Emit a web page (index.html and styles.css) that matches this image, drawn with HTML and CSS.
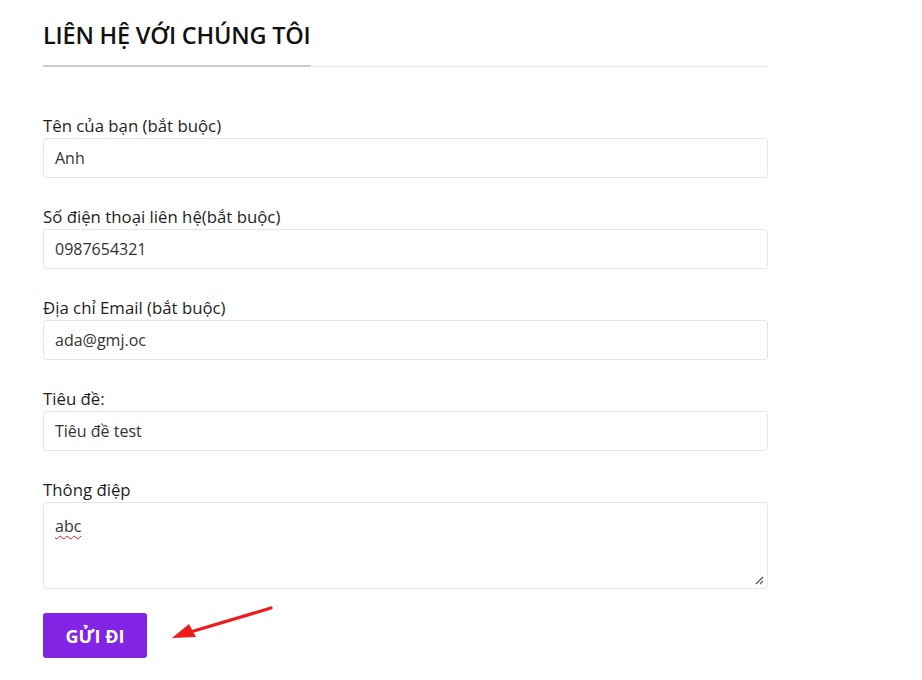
FILE: index.html
```html
<!DOCTYPE html>
<html lang="vi">
<head>
<meta charset="utf-8">
<title>Liên hệ với chúng tôi</title>
<link rel="stylesheet" href="styles.css">
</head>
<body>
<main class="page">
  <div class="title-wrap">
    <h2 class="title">LIÊN HỆ VỚI CHÚNG TÔI</h2>
  </div>
  <form class="form">
    <div class="field">
      <label class="label">Tên của bạn (bắt buộc)</label>
      <div class="input">Anh</div>
    </div>
    <div class="field">
      <label class="label">Số điện thoại liên hệ(bắt buộc)</label>
      <div class="input">0987654321</div>
    </div>
    <div class="field">
      <label class="label">Địa chỉ Email (bắt buộc)</label>
      <div class="input">ada@gmj.oc</div>
    </div>
    <div class="field">
      <label class="label">Tiêu đề:</label>
      <div class="input">Tiêu đề test</div>
    </div>
    <div class="field">
      <label class="label">Thông điệp</label>
      <div class="textarea">
        <span class="misspelled">abc</span>
        <svg class="grip" width="9" height="9" viewBox="0 0 9 9"><path d="M8 1 L1 8 M8 5 L5 8" stroke="#555" stroke-width="1.2" fill="none"/></svg>
      </div>
    </div>
    <div class="actions">
      <button type="button" class="submit">GỬI ĐI</button>
      <svg class="arrow" width="110" height="40" viewBox="0 0 110 40">
        <path d="M106 4 L22 29" stroke="#ee1c1c" stroke-width="3.2" stroke-linecap="round" fill="none"/>
        <path d="M7 34 L24 20 L31 33 Z" fill="#ee1c1c"/>
      </svg>
    </div>
  </form>
</main>
</body>
</html>
```
FILE: styles.css
```css
html, body {
  margin: 0;
  padding: 0;
  background: #ffffff;
}
body {
  font-family: "Open Sans", "Liberation Sans", sans-serif;
  color: #222;
}
.page {
  width: 725px;
  padding: 20px 0 0 43px;
}
.title-wrap {
  border-bottom: 1px solid #e8e8e8;
  height: 46px;
}
.title {
  display: inline-block;
  margin: 0;
  font-size: 23.5px;
  line-height: 30px;
  font-weight: 600;
  color: #111;
  letter-spacing: -0.2px;
  padding-bottom: 15px;
  border-bottom: 2px solid #cdcdcd;
}
.form {
  display: flex;
  flex-direction: column;
  gap: 27px;
  padding-top: 47px;
}
.field {
  display: flex;
  flex-direction: column;
}
.label {
  font-size: 16.8px;
  line-height: 24px;
  color: #1e1e1e;
}
.input {
  height: 40px;
  box-sizing: border-box;
  border: 1px solid #e6e6e6;
  border-radius: 3px;
  padding: 0 11px;
  font-size: 16px;
  line-height: 38px;
  color: #333;
}
.textarea {
  position: relative;
  height: 87px;
  box-sizing: border-box;
  border: 1px solid #e6e6e6;
  border-radius: 3px;
  padding: 11px 11px;
  font-size: 16px;
  line-height: 24px;
  color: #333;
}
.misspelled {
  text-decoration: underline wavy #d21e1e;
  text-decoration-thickness: 1px;
  text-underline-offset: 3px;
}
.grip {
  position: absolute;
  right: 3px;
  bottom: 3px;
}
.actions {
  position: relative;
  margin-top: -3px;
  display: flex;
}
.submit {
  width: 104px;
  height: 45px;
  border: 0;
  border-radius: 3px;
  background: #8224e3;
  color: #fff;
  font-family: "Open Sans", "Liberation Sans", sans-serif;
  font-weight: 700;
  font-size: 18px;
  padding: 0;
}
.arrow {
  position: absolute;
  left: 122px;
  top: -9px;
}
```
